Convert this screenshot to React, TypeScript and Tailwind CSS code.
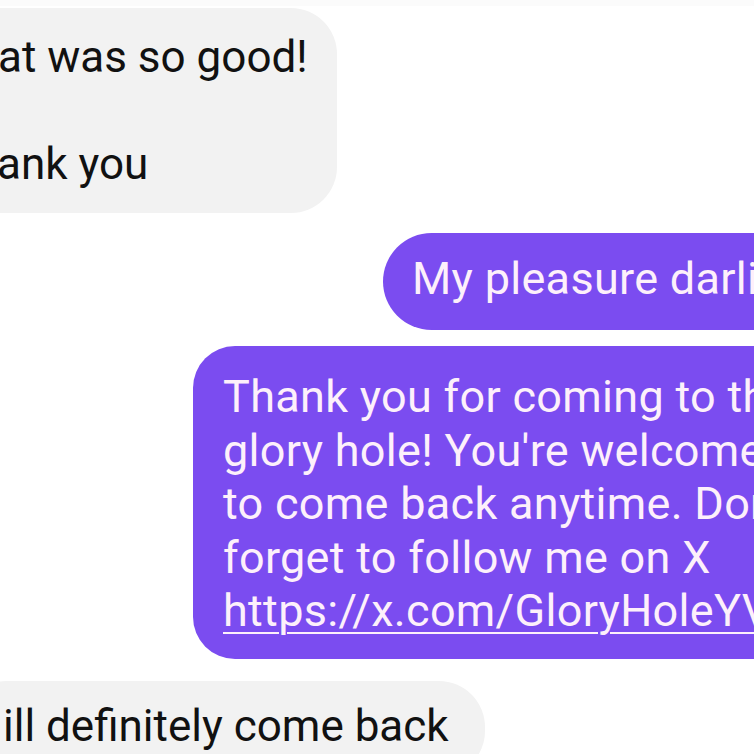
import React from "react";

export default function App() {
  return (
    <div
      className="w-[754px] h-[754px] overflow-hidden bg-white flex flex-col"
      style={{ fontFamily: "Roboto, 'Noto Sans', sans-serif" }}
    >
      <div className="h-[6px] w-full bg-[#fbfbfb] shrink-0" />
      {/* Grey bubble 1 */}
      <div className="mt-[2px] ml-[-60px] w-[397px] shrink-0 rounded-[46px] bg-[#f2f2f2] pl-[58px] pt-[23px] pb-[21px] text-[44px] leading-[53.5px] text-[#111111] whitespace-nowrap">
        <div>at was so good!</div>
        <div>&nbsp;</div>
        <div className="-ml-[1px]">ank you</div>
      </div>

      {/* Purple bubble 2 */}
      <div className="mt-[20px] ml-[383px] w-[460px] shrink-0 rounded-[49px] bg-[#7b4cf0] pl-[29px] pt-[19px] pb-[25px] text-[45px] tracking-[0.3px] leading-[53.5px] text-[#fdf0fb] whitespace-nowrap">
        My pleasure darling
      </div>

      {/* Purple bubble 3 */}
      <div className="mt-[16px] ml-[193px] w-[640px] shrink-0 rounded-[42px] bg-[#7b4cf0] pl-[30px] pt-[24px] pb-[21px] text-[45px] tracking-[0.3px] leading-[53.5px] text-[#fdf0fb] whitespace-nowrap">
        <div>Thank you for coming to the</div>
        <div>glory hole! You're welcome</div>
        <div>to come back anytime. Don't</div>
        <div>forget to follow me on X</div>
        <div className="underline decoration-[2px] underline-offset-[6px]">https://x.com/GloryHoleYVR</div>
      </div>

      {/* Grey bubble 4 */}
      <div className="mt-[22px] ml-[-40px] w-[525px] shrink-0 rounded-[46px] bg-[#f2f2f2] pl-[43px] pt-[19px] pb-[24px] text-[44px] leading-[53.5px] text-[#111111] whitespace-nowrap">
        ill definitely come back
      </div>
    </div>
  );
}
